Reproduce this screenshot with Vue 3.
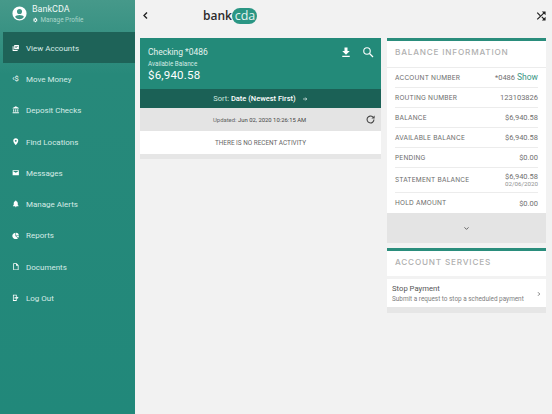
<template>
  <div class="app">
    <aside class="sidebar">
      <div class="profile">
        <svg class="avatar" viewBox="0 0 24 24"><path fill="#fff" d="M12 2a10 10 0 1 0 0 20 10 10 0 0 0 0-20zm0 3.600a3.600 3.600 0 1 1 0 7.200 3.600 3.600 0 0 1 0-7.200zM12 20a7.700 7.700 0 0 1-6.200-3.200c.4-1.700 3.700-2.700 6.200-2.700s5.800 1 6.200 2.700A7.700 7.700 0 0 1 12 20z"/></svg>
        <div>
          <div class="profile-name">BankCDA</div>
          <div class="profile-link">
            <svg viewBox="0 0 24 24"><path fill="currentColor" d="M19.400 13a7.600 7.600 0 0 0 0-2l2.100-1.600-2-3.500-2.500 1a7.500 7.500 0 0 0-1.700-1L15.400 3.200h-4l-.4 2.700a7.500 7.500 0 0 0-1.700 1l-2.500-1-2 3.500L6.900 11a7.600 7.600 0 0 0 0 2l-2.100 1.600 2 3.500 2.500-1c.5.400 1.100.700 1.700 1l.4 2.700h4l.4-2.700c.6-.3 1.200-.6 1.700-1l2.500 1 2-3.500zM13.400 15.500a3.500 3.500 0 1 1 0-7 3.500 3.500 0 0 1 0 7z"/></svg>
            Manage Profile
          </div>
        </div>
      </div>
      <nav class="menu">
        <div v-for="item in menu" :key="item.label" class="menu-item" :class="{ active: item.active }">
          <span class="menu-icon">
            <span v-if="item.text" class="menu-glyph">{{ item.text }}</span>
            <svg v-else viewBox="0 0 24 24"><path fill="currentColor" :d="item.icon" /></svg>
          </span>
          <span class="menu-label">{{ item.label }}</span>
        </div>
      </nav>
    </aside>

    <main class="content">
      <header class="topbar">
        <svg class="back" viewBox="0 0 24 24"><path fill="none" stroke="#222" stroke-width="3.600" d="M16 4l-8 8 8 8"/></svg>
        <div class="logo">
          <span class="logo-bank">bank</span><span class="logo-cda">cda</span>
        </div>
        <svg class="shuffle" viewBox="0 0 24 24"><path fill="none" stroke="#222" stroke-width="3" d="M3 4l7 7M14 14l6 6M3 20L20 4"/><path fill="#222" d="M14 1h9v9zM14 23h9v-9z"/></svg>
      </header>

      <div class="columns">
        <section class="left">
          <div class="account">
            <div class="account-top">
              <div>
                <div class="account-name">Checking *0486</div>
                <div class="account-sub">Available Balance</div>
                <div class="account-amount">$6,940.58</div>
              </div>
              <div class="account-actions">
                <svg viewBox="0 0 24 24"><path fill="#fff" d="M9 3h6v7h4.500L12 17.500 4.500 10H9zM4.500 19.500h15V22h-15z"/></svg>
                <svg viewBox="0 0 24 24"><circle cx="10" cy="10" r="6.500" fill="none" stroke="#fff" stroke-width="2.200"/><path stroke="#fff" stroke-width="2.400" d="M15 15l7 7"/></svg>
              </div>
            </div>
            <div class="sort">
              <span>Sort: <b>Date (Newest First)</b></span>
              <svg viewBox="0 0 24 24"><path fill="none" stroke="#fff" stroke-width="2.500" d="M4 12h15M13 6l6 6-6 6"/></svg>
            </div>
          </div>
          <div class="updated">
            <span class="updated-text">Updated: <b>Jun 02, 2020 10:26:15 AM</b></span>
            <svg viewBox="0 0 24 24"><path fill="none" stroke="#444" stroke-width="2.400" d="M19.500 12a7.500 7.500 0 1 1-2.400-5.500"/><path fill="#444" d="M21 3v7h-7z"/></svg>
          </div>
          <div class="empty">THERE IS NO RECENT ACTIVITY</div>
          <div class="strip"></div>
        </section>

        <section class="right">
          <div class="card">
            <h2 class="card-title">BALANCE INFORMATION</h2>
            <div class="rows">
              <div v-for="row in balances" :key="row.label" class="row" :class="{ tall: row.sub }">
                <span class="row-label">{{ row.label }}</span>
                <span class="row-value">
                  {{ row.value }}<a v-if="row.show" class="show">Show</a>
                  <small v-if="row.sub">{{ row.sub }}</small>
                </span>
              </div>
            </div>
            <div class="expand">
              <svg viewBox="0 0 24 24"><path fill="none" stroke="#555" stroke-width="3" d="M5 8l7 7 7-7"/></svg>
            </div>
          </div>

          <div class="card services">
            <h2 class="card-title">ACCOUNT SERVICES</h2>
            <div class="service">
              <div>
                <div class="service-name">Stop Payment</div>
                <div class="service-desc">Submit a request to stop a scheduled payment</div>
              </div>
              <svg viewBox="0 0 24 24"><path fill="none" stroke="#555" stroke-width="3" d="M8 5l7 7-7 7"/></svg>
            </div>
            <div class="strip"></div>
          </div>
        </section>
      </div>
    </main>
  </div>
</template>

<script setup>
const menu = [
  { label: 'View Accounts', active: true, icon: 'M7 3h15v14H7zM2 7h3v12h13v3H2zM10 7v2h9V7zM10 11v2h6v-2z' },
  { label: 'Move Money', text: '‹$' },
  { label: 'Deposit Checks', icon: 'M12 1l10 5v2H2V6zM4 10h3v8H4zM10.500 10h3v8h-3zM17 10h3v8h-3zM2 20h20v3H2z' },
  { label: 'Find Locations', icon: 'M12 1a8 8 0 0 0-8 8c0 5.500 8 14 8 14s8-8.500 8-14a8 8 0 0 0-8-8zm0 11a3 3 0 1 1 0-6 3 3 0 0 1 0 6z' },
  { label: 'Messages', icon: 'M2 4h20v16H2zM4 7l8 5 8-5v-1H4z' },
  { label: 'Manage Alerts', icon: 'M12 1.500a2 2 0 0 0-2 2v.700C7 5.200 5.500 8 5.500 11v5L3 18.500V20h18v-1.500L18.500 16v-5c0-3-1.500-5.800-4.500-6.800v-.700a2 2 0 0 0-2-2zM9.500 21a2.500 2.500 0 0 0 5 0z' },
  { label: 'Reports', icon: 'M11 2v10.500L19 20A10.500 10.500 0 1 1 11 2zM13 2a9.500 9.500 0 0 1 9 9h-9zM13.500 13H22a10 10 0 0 1-2 5.500z' },
  { label: 'Documents', icon: 'M4 1h11l6 6v16H4zm2.500 2.500v17h12V9H13V3.500z' },
  { label: 'Log Out', icon: 'M3 2h12v6h-2.500V4.500h-7v15h7V16H15v6H3zM14 7.500l7.500 4.500-7.500 4.500V14H8v-4h6z' },
]

const balances = [
  { label: 'ACCOUNT NUMBER', value: '*0486', show: true },
  { label: 'ROUTING NUMBER', value: '123103826' },
  { label: 'BALANCE', value: '$6,940.58' },
  { label: 'AVAILABLE BALANCE', value: '$6,940.58' },
  { label: 'PENDING', value: '$0.00' },
  { label: 'STATEMENT BALANCE', value: '$6,940.58', sub: '02/06/2020' },
  { label: 'HOLD AMOUNT', value: '$0.00' },
]
</script>

<style>
html, body {
  margin: 0;
  background: #f2f2f2;
}
</style>

<style scoped>
.app {
  display: flex;
  width: 552px;
  height: 414px;
  overflow: hidden;
  font-family: Roboto, "Liberation Sans", sans-serif;
  background: #f2f2f2;
  color: #444;
}

.sidebar {
  width: 135px;
  flex-shrink: 0;
  background: linear-gradient(180deg, #46998a 0%, #27897a 18%, #21887a 100%);
  color: #d5ebe6;
}

.profile {
  height: 32px;
  box-sizing: border-box;
  padding: 0 0 5px 10.500px;
  display: flex;
  align-items: center;
  gap: 4.500px;
}

.avatar {
  width: 17px;
  height: 17px;
}

.profile-name {
  font-size: 9px;
  color: #eef7f5;
  line-height: 12px;
}

.profile-link {
  display: flex;
  align-items: center;
  gap: 2.500px;
  margin-top: 1px;
  font-size: 6.400px;
  line-height: 8px;
  color: #a9d6cb;
}

.profile-link svg {
  width: 6px;
  height: 6px;
  color: #fff;
}

.menu {
  padding-left: 3px;
}

.menu-item {
  display: flex;
  align-items: center;
  height: 31.300px;
  font-size: 8px;
}

.menu-label {
  padding-top: 1px;
}

.menu-item.active {
  background: #1e6358;
}

.menu-icon {
  width: 8px;
  margin-left: 8.500px;
  margin-right: 6.500px;
  display: flex;
  justify-content: center;
  color: #fff;
}

.menu-icon svg {
  width: 7.500px;
  height: 7.500px;
}

.menu-glyph {
  font-size: 7.500px;
  white-space: nowrap;
}

.content {
  flex: 1;
  min-width: 0;
  padding: 0 6px 0 5px;
}

.topbar {
  height: 38px;
  display: flex;
  align-items: center;
}

.back {
  width: 9px;
  height: 9px;
  margin-left: 1px;
  margin-top: -7px;
}

.logo {
  display: flex;
  align-items: center;
  margin-left: 53px;
  margin-top: -7px;
}

.logo-bank {
  font-family: "Open Sans", sans-serif;
  font-size: 12px;
  font-weight: 600;
  color: #2b2b2b;
}

.logo-cda {
  margin-left: 0.500px;
  width: 25px;
  height: 16px;
  border-radius: 8px;
  background: #2a9684;
  color: #e6f4f1;
  font-family: "Open Sans", sans-serif;
  font-size: 12.500px;
  line-height: 15px;
  text-align: center;
}

.shuffle {
  width: 10px;
  height: 10px;
  margin-left: auto;
  margin-top: -7px;
}

.columns {
  display: flex;
  gap: 6px;
  align-items: flex-start;
}

.left {
  width: 241px;
  flex-shrink: 0;
}

.right {
  flex: 1;
  min-width: 0;
}

.account-top {
  height: 51px;
  box-sizing: border-box;
  background: #238a79;
  padding: 8px 8px 0;
  display: flex;
  justify-content: space-between;
  color: #fff;
}

.account-name {
  font-size: 8.500px;
  line-height: 12px;
  color: #e3f2ee;
}

.account-sub {
  font-size: 6.300px;
  line-height: 8px;
  margin-top: 2px;
  color: #d4ebe5;
}

.account-amount {
  font-size: 11.500px;
  line-height: 14px;
  letter-spacing: 0.200px;
}

.account-actions {
  display: flex;
  gap: 10px;
  padding-top: 0;
  margin-right: -1px;
}

.account-actions svg {
  width: 12px;
  height: 12px;
}

.sort {
  height: 19px;
  background: #1b6156;
  display: flex;
  align-items: center;
  justify-content: center;
  gap: 6px;
  font-size: 7.500px;
  color: #cde5df;
}

.sort b {
  font-weight: 500;
  color: #fff;
}

.sort svg {
  width: 6px;
  height: 6px;
}

.updated {
  height: 23px;
  background: #e4e4e4;
  display: flex;
  align-items: center;
  font-size: 5.900px;
  color: #666;
}

.updated-text {
  margin-left: 73px;
}

.updated b {
  font-weight: 400;
  color: #444;
}

.updated svg {
  width: 11px;
  height: 11px;
  margin-left: auto;
  margin-right: 5px;
}

.empty {
  height: 23px;
  background: #fff;
  display: flex;
  align-items: center;
  justify-content: center;
  font-size: 6.400px;
  color: #666;
}

.strip {
  height: 5px;
  background: #e6e6e6;
}

.card {
  border-top: 3px solid #2a8d7c;
}

.card-title {
  margin: 0;
  height: 26px;
  padding-left: 8px;
  background: #fff;
  font-family: Inter, sans-serif;
  font-size: 8.200px;
  font-weight: 500;
  line-height: 23px;
  letter-spacing: 0.800px;
  color: #b0b0b0;
  white-space: nowrap;
}

.rows {
  background: #fff;
  border-top: 1px solid #ececec;
  padding: 0 8px;
}

.row {
  height: 20px;
  box-sizing: border-box;
  display: flex;
  justify-content: space-between;
  align-items: center;
  border-bottom: 1px solid #ececec;
}

.row:last-child {
  border-bottom: none;
}

.row.tall {
  height: 25px;
}

.row-label {
  font-family: Inter, sans-serif;
  font-size: 6.500px;
  font-weight: 400;
  letter-spacing: 0.200px;
  color: #6a6a6a;
}

.row-value {
  font-size: 7.500px;
  color: #707070;
  text-align: right;
  line-height: 9px;
}

.row-value small {
  display: block;
  font-size: 6.200px;
  line-height: 7px;
  color: #909090;
}

.show {
  margin-left: 2px;
  font-size: 8.500px;
  color: #3a9685;
}

.expand {
  height: 30px;
  background: #e4e4e4;
  display: flex;
  align-items: center;
  justify-content: center;
}

.expand svg {
  width: 7px;
  height: 7px;
}

.services {
  margin-top: 5px;
}

.services .card-title {
  height: 25px;
}

.service {
  height: 28px;
  margin-top: 3px;
  padding: 1px 4px 0 5px;
  background: #fff;
  display: flex;
  align-items: center;
  justify-content: space-between;
  box-sizing: border-box;
}

.service-name {
  font-size: 7.700px;
  line-height: 10px;
  color: #555;
}

.service-desc {
  font-size: 6.400px;
  line-height: 9px;
  margin-top: 1px;
  color: #808080;
}

.service svg {
  width: 6px;
  height: 6px;
}

.services .strip {
  height: 6px;
}
</style>
